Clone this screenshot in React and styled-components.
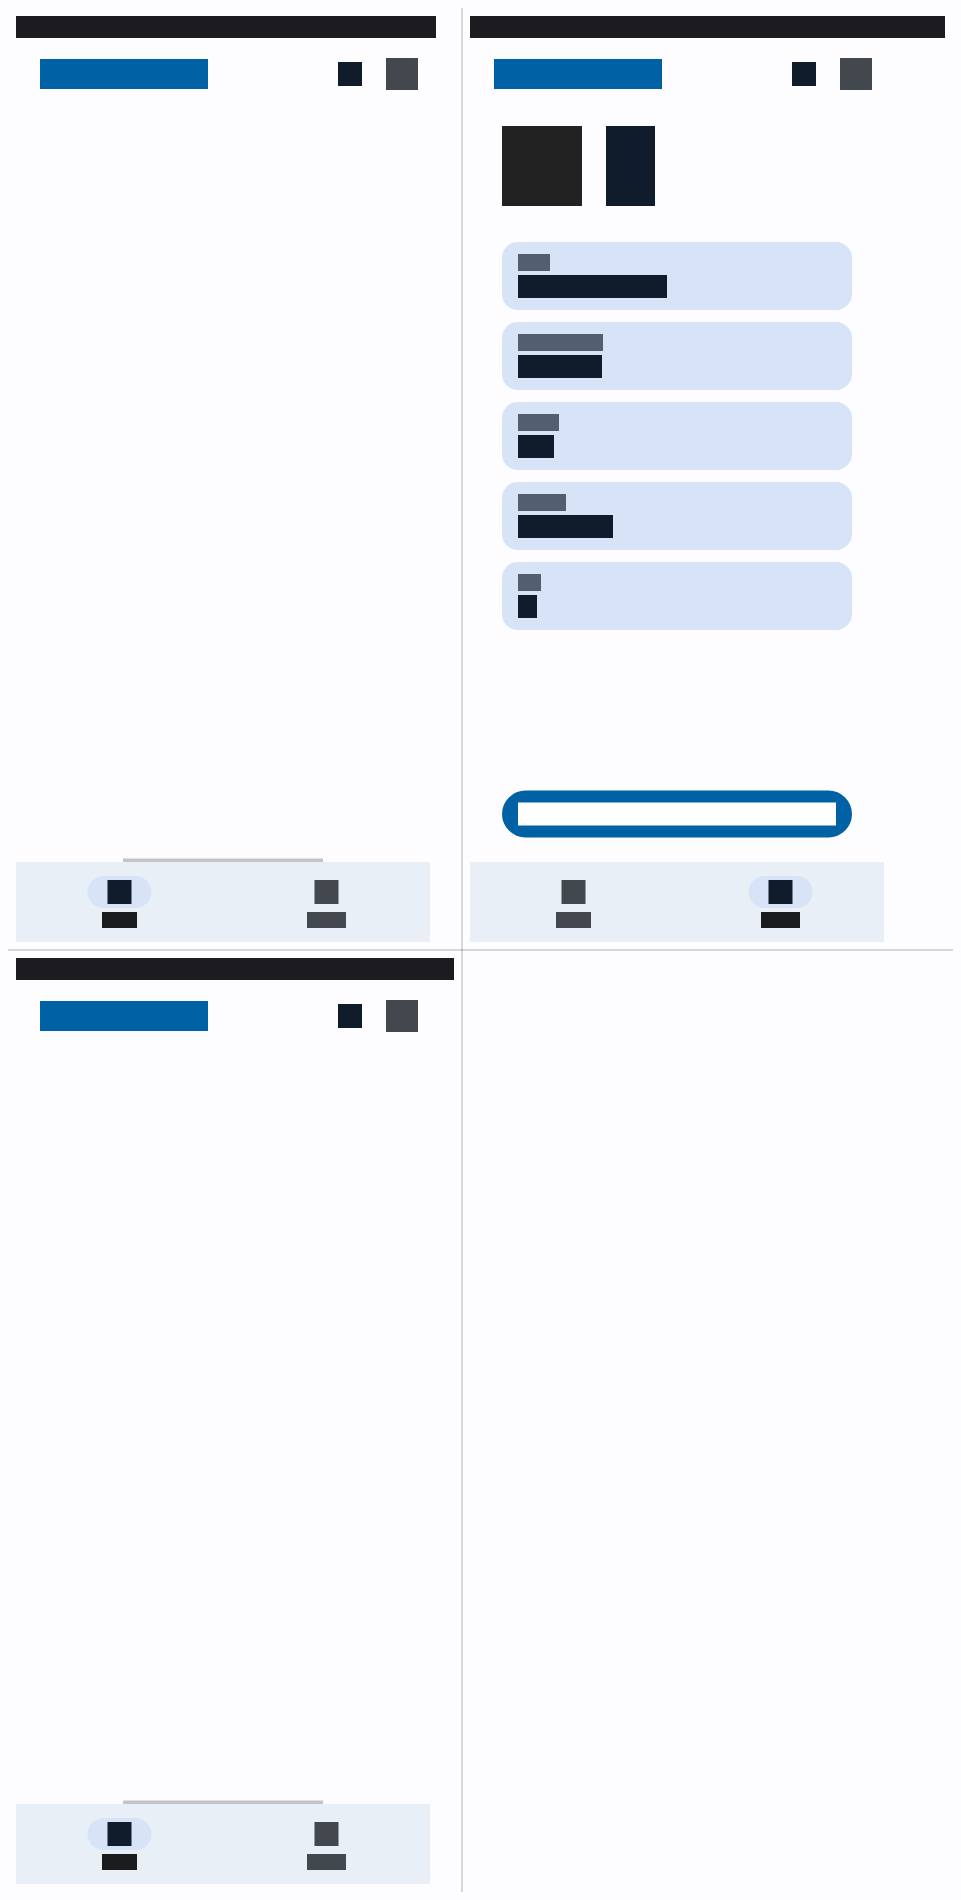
import React from "react";
import styled, { createGlobalStyle } from "styled-components";

const c = {
  background: "#fdfcff",
  primary: "#0061a4",
  onPrimary: "#ffffff",
  secondary: "#535f70",
  container: "#d7e3f7",
  onContainer: "#101c2b",
  onSurface: "#1a1c1e",
  variant: "#43474e",
  nav: "#e8eff7",
  status: "#1c1b1f",
};

const GlobalStyle = createGlobalStyle`
  *, *::before, *::after { box-sizing: border-box; }
  html { background: ${c.background}; }
  body { margin: 0; overflow: hidden; font-family: "Roboto", sans-serif; }
`;

const Board = styled.main`
  display: grid;
  width: 961px;
  height: 1900px;
  padding: 8px;
  grid-template-columns: 454px 491px;
  grid-template-rows: 942px 942px;
  background: ${c.background};
`;

const VerticalRule = styled.div`
  grid-column: 2;
  grid-row: 1 / 3;
  width: 2px;
  margin-left: -1px;
  background: rgba(0, 0, 0, 0.15);
`;

const HorizontalRule = styled.div`
  grid-column: 1 / 3;
  grid-row: 2;
  height: 2px;
  margin-top: -1px;
  background: rgba(0, 0, 0, 0.15);
`;

const ScreenFrame = styled.section`
  grid-column: ${(p) => p.$column};
  grid-row: ${(p) => p.$row};
  display: flex;
  flex-direction: column;
  padding: 8px;
`;

const StatusBar = styled.div`
  flex: none;
  width: ${(p) => p.$width};
  height: 22px;
  background: ${c.status};
`;

const AppBar = styled.header`
  display: flex;
  flex: none;
  align-items: center;
  width: 414px;
  height: 64px;
  margin-top: 4px;
  padding: 0 12px 0 24px;
`;

const Title = styled.div`
  width: 168px;
  height: 30px;
  margin-right: auto;
  background: ${c.primary};
`;

const Action = styled.div`
  width: 24px;
  height: 24px;
  margin-right: 24px;
  background: ${c.onContainer};
`;

const Avatar = styled.div`
  width: 32px;
  height: 32px;
  background: ${c.variant};
`;

const Body = styled.div`
  display: flex;
  flex: 1;
  flex-direction: column;
  width: 414px;
  padding: ${(p) => (p.$padded ? "20px 32px 24px" : "0")};
`;

const Profile = styled.div`
  display: flex;
  gap: 24px;
  margin-bottom: 36px;
`;

const Photo = styled.div`
  width: 80px;
  height: 80px;
  background: #222222;
`;

const Name = styled.div`
  width: 49px;
  height: 80px;
  background: ${c.onContainer};
`;

const CardList = styled.div`
  display: flex;
  flex-direction: column;
  gap: 12px;
`;

const Card = styled.div`
  display: flex;
  flex-direction: column;
  gap: 4px;
  padding: 12px 16px;
  border-radius: 16px;
  background: ${c.container};
`;

const CardLabel = styled.div`
  width: ${(p) => p.$width}px;
  height: 17px;
  background: ${c.secondary};
`;

const CardValue = styled.div`
  width: ${(p) => p.$width}px;
  height: 23px;
  background: ${c.onContainer};
`;

const PrimaryButton = styled.div`
  height: 47px;
  margin-top: auto;
  padding: 12px 16px;
  border-radius: 24px;
  background: ${c.primary};
  transform: translateY(-0.5px);
`;

const ButtonLabel = styled.div`
  height: 23px;
  background: ${c.onPrimary};
`;

const ScrollHandle = styled.div`
  align-self: center;
  width: 200px;
  height: 4px;
  margin-top: auto;
  border-top: 1px solid #e0e0e2;
  background: #c4c4c6;
`;

const NavBar = styled.nav`
  display: flex;
  flex: none;
  width: 414px;
  height: 80px;
  background: ${c.nav};
`;

const NavItem = styled.div`
  display: flex;
  flex: 1;
  flex-direction: column;
  align-items: center;
  gap: 4px;
  padding: 14px 0;
`;

const Pill = styled.div`
  display: flex;
  align-items: center;
  justify-content: center;
  width: 64px;
  height: 32px;
  margin-right: 1px;
  border-radius: 16px;
  background: ${(p) => (p.$active ? c.container : "transparent")};
  transform: translateX(0.5px);
`;

const NavIcon = styled.div`
  width: 24px;
  height: 24px;
  background: ${(p) => (p.$active ? c.onContainer : c.variant)};
`;

const NavLabel = styled.div`
  width: ${(p) => p.$width}px;
  height: 16px;
  background: ${(p) => (p.$active ? c.onSurface : c.variant)};
`;

const details = [
  [32, 149],
  [85, 84],
  [41, 36],
  [48, 95],
  [23, 19],
];

function Navigation({ active }) {
  return (
    <NavBar>
      {[35, 39].map((width, i) => (
        <NavItem key={width}>
          <Pill $active={i === active}>
            <NavIcon $active={i === active} />
          </Pill>
          <NavLabel $width={width} $active={i === active} />
        </NavItem>
      ))}
    </NavBar>
  );
}

function Screen({ column, row, statusWidth = "100%", active, children }) {
  return (
    <ScreenFrame $column={column} $row={row}>
      <StatusBar $width={statusWidth} />
      <AppBar>
        <Title />
        <Action />
        <Avatar />
      </AppBar>
      {children}
      <Navigation active={active} />
    </ScreenFrame>
  );
}

function Home(props) {
  return (
    <Screen {...props} active={0}>
      <Body>
        <ScrollHandle />
      </Body>
    </Screen>
  );
}

function Account(props) {
  return (
    <Screen {...props} active={1}>
      <Body $padded>
        <Profile>
          <Photo />
          <Name />
        </Profile>
        <CardList>
          {details.map(([label, value]) => (
            <Card key={label}>
              <CardLabel $width={label} />
              <CardValue $width={value} />
            </Card>
          ))}
        </CardList>
        <PrimaryButton>
          <ButtonLabel />
        </PrimaryButton>
      </Body>
    </Screen>
  );
}

export default function App() {
  return (
    <>
      <GlobalStyle />
      <Board>
        <Home column={1} row={1} statusWidth="420px" />
        <Account column={2} row={1} />
        <Home column={1} row={2} />
        <VerticalRule />
        <HorizontalRule />
      </Board>
    </>
  );
}
